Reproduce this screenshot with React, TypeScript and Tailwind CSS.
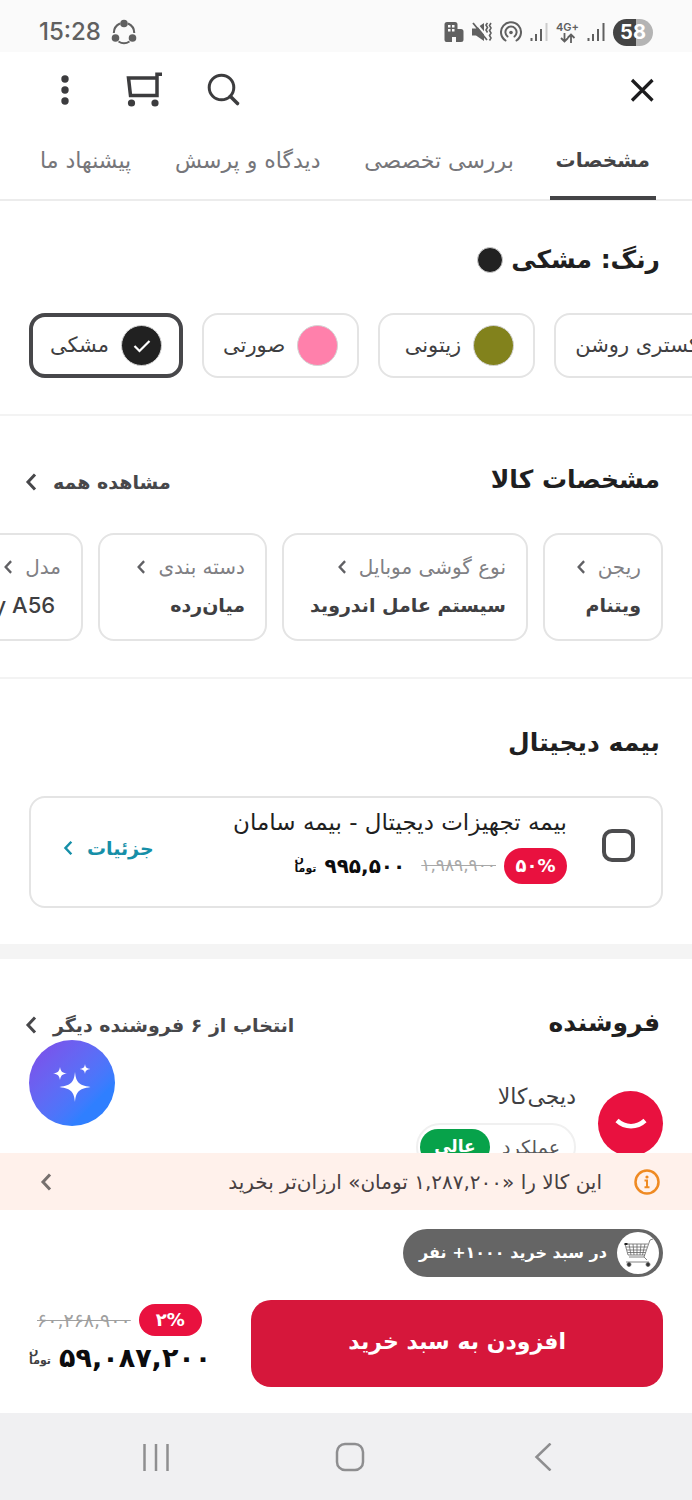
import type { ReactNode } from 'react';

function Chevron({ className }: { className: string }) {
  return (
    <svg viewBox="0 0 12 18" className={className} fill="none" stroke="currentColor" strokeWidth="3" aria-hidden="true">
      <path d="M10 1.5 3 9l7 7.5" />
    </svg>
  );
}

function StatusBar() {
  return (
    <div dir="ltr" className="flex h-13 shrink-0 items-center justify-between bg-[#fafafa] px-[39px] pt-3 font-['Inter',sans-serif] text-[#606060]">
      <div className="flex items-center gap-2.5">
        <span className="text-2xl font-medium">15:28</span>
        <svg viewBox="0 0 26 26" className="size-[26px]" fill="none" stroke="currentColor" strokeWidth="2" aria-hidden="true">
          <path d="M9 4.5A10.5 10.5 0 0 0 2.8 14M17 4.500A10.500 10.500 0 0 1 23.300 14M7.500 22.500a10.500 10.500 0 0 0 11 0" />
          <g fill="currentColor" stroke="none">
            <circle cx="13" cy="4.500" r="3.800" />
            <circle cx="4.500" cy="19" r="3.800" />
            <circle cx="21.500" cy="19" r="3.800" />
          </g>
        </svg>
      </div>
      <div className="flex items-center gap-2">
        <svg viewBox="0 0 20 20" className="size-5" aria-hidden="true">
          <path fill="currentColor" fillRule="evenodd" d="M3 0h8a2.500 2.500 0 0 1 2.500 2.500V7H17a2.500 2.500 0 0 1 2.500 2.500v8A2.500 2.500 0 0 1 17 20h-5v-5H8v5H2.500A2 2 0 0 1 .5 18V2.500A2.500 2.500 0 0 1 3 0Zm1 3v2.500h2.500V3Zm4 0v2.500h2.500V3ZM4 7v2.500h2.500V7Zm4 0v2.500h2.500V7Z" />
        </svg>
        <svg viewBox="0 0 20 20" className="size-5" aria-hidden="true">
          <path fill="currentColor" d="M0 6.500h4L12 1v18l-8-5.500H0Z" />
          <path stroke="#fafafa" strokeWidth="2" d="m3 0 14 17" />
          <path fill="none" stroke="currentColor" strokeWidth="1.800" d="m1 1 14 17" />
          <path fill="none" stroke="currentColor" strokeWidth="1.600" d="M15.500 1 14 3l1.500 2.500L14 8l1.500 2.500M19 1l-1.500 2.500L19 6l-1.500 2.500L19 11l-1.500 2.500L19 16l-1.500 2.500" />
        </svg>
        <svg viewBox="0 0 22 22" className="size-[22px]" fill="none" stroke="currentColor" strokeWidth="2" strokeLinecap="round" aria-hidden="true">
          <path d="M5.500 19.500a10 10 0 1 1 11 0" />
          <path d="M7.500 15.500a5.600 5.600 0 1 1 7 0" />
          <circle cx="11" cy="11.500" r="1.800" fill="currentColor" stroke="none" />
        </svg>
        <svg viewBox="0 0 18 20" className="h-5 w-[18px]" fill="none" stroke="currentColor" strokeWidth="2" aria-hidden="true">
          <path d="M1.500 16v3M6 12v7M11 7v12" />
          <path stroke="#cccccc" d="M16.500 1v18" />
        </svg>
        <div className="flex flex-col items-center">
          <span className="text-[11px] leading-3 font-semibold">4G+</span>
          <svg viewBox="0 0 16 10" className="h-2.5 w-4" fill="none" stroke="currentColor" strokeWidth="1.800" aria-hidden="true">
            <path d="M4.500 0v8.500M1 5l3.500 3.500L8 5M11 10V1.500M7.500 5 11 1.500 14.500 5" />
          </svg>
        </div>
        <svg viewBox="0 0 18 20" className="h-5 w-[18px]" fill="none" stroke="currentColor" strokeWidth="2" aria-hidden="true">
          <path d="M1.500 16v3M6 12v7M11 7v12M16.500 1v18" />
        </svg>
        <span className="flex h-[27px] w-10 items-center justify-center rounded-full bg-linear-to-r from-[#444444] from-58% to-[#b4b4b4] to-58% text-xl font-bold text-white">58</span>
      </div>
    </div>
  );
}

function Header() {
  return (
    <div className="flex h-[76px] shrink-0 items-center justify-between pr-9 pl-[49px] text-[#3c3c3e]">
      <button type="button" aria-label="بستن" className="text-[#1c1c1e]">
        <svg viewBox="0 0 28 28" className="size-7" fill="none" stroke="currentColor" strokeWidth="3.200" aria-hidden="true">
          <path d="m4 4 20.500 20.500M24.500 4 4 24.500" />
        </svg>
      </button>
      <div className="flex items-center gap-11">
        <button type="button" aria-label="جستجو">
          <svg viewBox="0 0 34 34" className="size-[34px]" fill="none" stroke="currentColor" strokeWidth="3" aria-hidden="true">
            <circle cx="14.500" cy="14.500" r="12.300" />
            <path d="m23.500 23.500 7 7" strokeWidth="3.600" strokeLinecap="round" />
          </svg>
        </button>
        <button type="button" aria-label="سبد خرید">
          <svg viewBox="0 0 38 36" className="h-9 w-[38px]" fill="none" stroke="currentColor" strokeWidth="3.500" aria-hidden="true">
            <path d="M37 2.200h-5V23.500H5.500L3.500 6H32" />
            <circle cx="6.500" cy="31" r="3.600" fill="currentColor" stroke="none" />
            <circle cx="30" cy="31" r="3.600" fill="currentColor" stroke="none" />
          </svg>
        </button>
        <button type="button" aria-label="بیشتر" className="px-3">
          <svg viewBox="0 0 8 30" className="h-[30px] w-2" fill="currentColor" aria-hidden="true">
            <circle cx="4" cy="4" r="3.700" />
            <circle cx="4" cy="15" r="3.700" />
            <circle cx="4" cy="26" r="3.700" />
          </svg>
        </button>
      </div>
    </div>
  );
}

function Tabs() {
  const tabs = ['مشخصات', 'بررسی تخصصی', 'دیدگاه و پرسش', 'پیشنهاد ما'];
  return (
    <nav className="flex h-[73px] shrink-0 justify-between border-b-2 border-[#ececec] pr-9 pl-8">
      {tabs.map((tab, i) =>
        i === 0 ? (
          <a key={tab} href="#specs" aria-current="page" className="flex h-[72px] items-center rounded-t-sm border-b-4 border-[#444446] px-1.5 pt-2 pb-3 text-xl font-bold text-[#444446]">
            {tab}
          </a>
        ) : (
          <a key={tab} href="#more" className="flex h-[68px] items-center px-2 pt-2 pb-3 text-[22px] text-[#76767a]">
            {tab}
          </a>
        ),
      )}
    </nav>
  );
}

function Title({ children }: { children: ReactNode }) {
  return <h2 className="flex items-center gap-2 text-[25px] leading-9 font-bold text-[#1f1f21]">{children}</h2>;
}

function MoreLink({ children }: { children: ReactNode }) {
  return (
    <a href="#all" className="flex items-center gap-4 pt-1 text-[19px] leading-9 font-bold text-[#47474a]">
      {children}
      <Chevron className="h-[18px] w-3" />
    </a>
  );
}

function ColorOption({ name, swatch, selected = false }: { name: string; swatch: string; selected?: boolean }) {
  return (
    <button
      type="button"
      aria-pressed={selected}
      className={`flex h-[65px] shrink-0 items-center gap-3 rounded-2xl text-[21px] text-[#3f3f42] ${
        selected ? 'border-4 border-[#47474a] px-[17px]' : 'min-w-[157px] border-2 border-[#e4e4e4] px-[19px]'
      }`}
    >
      <span className={`flex size-[41px] items-center justify-center rounded-full border border-[#d4d4d4] ${swatch}`}>
        {selected && (
          <svg viewBox="0 0 18 14" className="h-3.5 w-[18px]" fill="none" stroke="white" strokeWidth="2.200" aria-hidden="true">
            <path d="m1.500 7 5 5L16.500 2" />
          </svg>
        )}
      </span>
      {name}
    </button>
  );
}

function Spec({ label, value, className }: { label: string; value: string; className: string }) {
  return (
    <a href="#spec" className={`flex h-[108px] shrink-0 flex-col items-start justify-center gap-2 rounded-2xl border-2 border-[#e4e4e4] pr-5 pl-[26px] whitespace-nowrap ${className}`}>
      <span className="flex items-center gap-3 font-['DejaVu_Sans',sans-serif] text-xl leading-7 font-normal text-[#808084]">
        {label}
        <Chevron className="h-3.5 w-2.5 text-[#606064]" />
      </span>
      <span className="leading-8 text-[#3f3f42]">{value}</span>
    </a>
  );
}

function Toman({ className }: { className: string }) {
  return (
    <span dir="rtl" aria-label="تومان" className={`flex flex-col items-end pb-1 text-[11px] font-bold ${className}`}>
      <span className="leading-2.5">ن</span>
      <span className="leading-2.5">توما</span>
    </span>
  );
}

function SellerLogo() {
  return (
    <span className="flex size-[65px] shrink-0 items-center justify-center rounded-full bg-[#e9113f]">
      <svg viewBox="0 0 32 14" className="h-3.5 w-8" fill="none" stroke="white" strokeWidth="4.500" aria-hidden="true">
        <path d="M2 3.500c8 7.500 20 7.500 28 0" />
      </svg>
    </span>
  );
}

function Trolley() {
  return (
    <span className="flex size-[42px] items-center justify-center rounded-full bg-white">
      <svg viewBox="0 0 30 30" className="size-[30px]" fill="none" stroke="#666666" strokeWidth="0.800" aria-hidden="true">
        <path d="M30 1l-3 1-6 17H6M2 6h23M2 6l3 11h17M3 9h21M4 12h19M4.500 14.500h18M6 6l2 11M10 6l1 11M14 6v11M18 6l-1 11M22 6l-2.500 11M21 19l3 3M3 24h23" />
        <path d="M1.500 6h3" strokeWidth="2" stroke="#222222" />
        <circle cx="6" cy="26.500" r="2" fill="#333333" />
        <circle cx="25" cy="26.500" r="2" fill="#333333" />
      </svg>
    </span>
  );
}

function Dock() {
  return (
    <footer className="relative shrink-0 bg-white">
      <button type="button" aria-label="دستیار هوشمند" className="absolute bottom-full left-[29px] mb-[27px] flex size-[86px] items-center justify-center rounded-full bg-linear-to-br from-[#7656ec] from-15% to-[#2f7fff] to-75%">
        <svg viewBox="0 0 38 38" className="size-[38px]" fill="white" aria-hidden="true">
          <path d="M22 8c1.200 10 3 13 15.500 15C25 25 23.200 28 22 38c-1.200-10-3-13-15.500-15C19 21 20.800 18 22 8Z" />
          <path d="M7 3c.8 4.500 2 5.800 7 6.500-5 .7-6.200 2-7 6.500-.8-4.500-2-5.800-7-6.500C5 8.800 6.200 7.500 7 3ZM32 0c.6 3.500 1.500 4.500 5.500 5-4 .5-4.900 1.500-5.500 5-.6-3.500-1.500-4.500-5.500-5 4-.5 4.900-1.500 5.500-5Z" />
        </svg>
      </button>
      <a href="#cheaper" className="flex h-[57px] items-center bg-[#fff1eb] pr-8 pl-10 text-xl text-[#474042]">
        <svg viewBox="0 0 26 26" className="ml-8 size-[26px] shrink-0 text-[#ef8a22]" fill="none" stroke="currentColor" strokeWidth="2.500" aria-hidden="true">
          <circle cx="13" cy="13" r="11.500" />
          <path d="M10.500 11.500H13V18M10.500 18.200h5" strokeWidth="2" />
          <circle cx="13" cy="8" r="1.600" fill="currentColor" stroke="none" />
        </svg>
        <span className="grow">این کالا را «۱,۲۸۷,۲۰۰ تومان» ارزان‌تر بخرید</span>
        <Chevron className="h-[18px] w-3 text-[#76706e]" />
      </a>
      <div className="px-[29px] pt-[19px] pb-[26px]">
        <div className="flex h-12 w-fit items-center gap-2.5 rounded-full bg-[#656565] pr-1 pl-4 text-base font-bold text-white">
          <Trolley />
          در سبد خرید ۱۰۰۰+ نفر
        </div>
        <div className="mt-[23px] flex items-center justify-between gap-10">
          <button type="button" className="h-[87px] grow rounded-[20px] bg-[#d6173b] pb-1 text-[22px] font-bold text-white">
            افزودن به سبد خرید
          </button>
          <div dir="ltr" className="flex flex-col gap-1 pb-2">
            <div className="flex items-center gap-2 pl-2">
              <span className="text-[19px] leading-8 text-[#a0a0a0] line-through">۶۰,۲۶۸,۹۰۰</span>
              <span className="flex h-8 w-[63px] items-center justify-center rounded-full bg-[#e9113f] text-lg font-bold text-white">۲%</span>
            </div>
            <div className="flex items-center gap-2">
              <Toman className="text-[#3f3f42]" />
              <span className="text-[27px] leading-9 font-bold text-[#0c0c0e]">۵۹,۰۸۷,۲۰۰</span>
            </div>
          </div>
        </div>
      </div>
      <div dir="ltr" className="flex h-[87px] items-center justify-between bg-[#f0f0f2] pr-[135px] pl-[142px] text-[#8e8e90]">
        <button type="button" aria-label="برنامه‌های اخیر">
          <svg viewBox="0 0 28 28" className="size-7" fill="none" stroke="currentColor" strokeWidth="2.500" aria-hidden="true">
            <path d="M2.500 1v27M14 1v27M25.500 1v27" />
          </svg>
        </button>
        <button type="button" aria-label="خانه">
          <svg viewBox="0 0 30 30" className="size-[30px]" fill="none" stroke="currentColor" strokeWidth="2.500" aria-hidden="true">
            <rect x="2" y="2" width="26" height="26" rx="8" />
          </svg>
        </button>
        <button type="button" aria-label="بازگشت">
          <svg viewBox="0 0 28 28" className="size-7" fill="none" stroke="currentColor" strokeWidth="2.500" aria-hidden="true">
            <path d="M21.500 0.500 7.500 14l14 13.500" />
          </svg>
        </button>
      </div>
    </footer>
  );
}

export default function App() {
  return (
    <div dir="rtl" lang="fa" className="flex h-screen flex-col overflow-hidden bg-white font-['DejaVu_Sans',sans-serif]">
      <StatusBar />
      <Header />
      <Tabs />
      <main className="min-h-0 flex-1 overflow-x-hidden overflow-y-auto [scrollbar-width:none]">
        <section className="border-b-2 border-[#f3f3f3] pt-[41px] pb-[36px]">
          <div className="px-8">
            <Title>
              رنگ: مشکی
              <span className="size-[26px] rounded-full border border-[#cccccc] bg-[#212121]" />
            </Title>
          </div>
          <div className="mt-[35px] flex justify-end gap-[19px] overflow-hidden pl-[29px]">
            <ColorOption name="خاکستری روشن" swatch="bg-[#d3d3d3]" />
            <ColorOption name="زیتونی" swatch="bg-[#82821c]" />
            <ColorOption name="صورتی" swatch="bg-[#ff80ab]" />
            <ColorOption name="مشکی" swatch="bg-[#212121]" selected />
          </div>
        </section>

        <section id="specs" className="border-b-2 border-[#f3f3f3] pt-[46px] pb-[36px]">
          <div className="flex h-9 items-center justify-between pr-8 pl-[25px]">
            <Title>مشخصات کالا</Title>
            <MoreLink>مشاهده همه</MoreLink>
          </div>
          <div className="mt-[35px] flex gap-[15px] overflow-hidden pr-[29px]">
            <Spec label="ریجن" value="ویتنام" className="min-w-[120px] text-[19px] font-bold" />
            <Spec label="نوع گوشی موبایل" value="سیستم عامل اندروید" className="min-w-[245px] text-[19px] font-bold" />
            <Spec label="دسته بندی" value="میان‌رده" className="min-w-[169px] text-[19px] font-bold" />
            <Spec label="مدل" value={'\u200EGalaxy A56\u00a0\u200E'} className="font-['Inter','DejaVu_Sans',sans-serif] text-[22px] font-medium" />
          </div>
        </section>

        <section className="border-b-[15px] border-[#f4f4f4] px-[29px] pt-[46px] pb-[36px]">
          <div className="px-[3px]">
            <Title>بیمه دیجیتال</Title>
          </div>
          <div className="mt-[35px] flex h-[112px] items-center rounded-2xl border-2 border-[#e4e4e4] pr-[26px] pb-3.5 pl-8">
            <input id="insurance" type="checkbox" className="size-[33px] shrink-0 appearance-none rounded-[10px] border-4 border-[#4c4c4e] checked:bg-[#4c4c4e]" />
            <div className="mr-[35px] flex grow flex-col gap-2.5">
              <label htmlFor="insurance" className="text-[23px] leading-8 text-[#1f1f21]">بیمه تجهیزات دیجیتال - بیمه سامان</label>
              <div className="flex items-center gap-2">
                <span dir="ltr" className="flex h-9 w-[63px] items-center justify-center rounded-full bg-[#e9113f] text-lg font-bold text-white">۵۰%</span>
                <span dir="ltr" className="text-[17px] text-[#a8a8a8] line-through">۱,۹۸۹,۹۰۰</span>
                <span dir="ltr" className="mr-2 text-xl font-bold text-[#0c0c0e]">۹۹۵,۵۰۰</span>
                <Toman className="text-[#0c0c0e]" />
              </div>
            </div>
            <a href="#details" className="flex items-center gap-3.5 pt-1.5 text-[19px] font-bold text-[#168fa8]">
              جزئیات
              <Chevron className="h-4 w-2.5" />
            </a>
          </div>
        </section>

        <section className="px-[29px] pt-[46px] pb-10">
          <div className="-ml-1 flex h-9 items-center justify-between pr-[3px]">
            <Title>فروشنده</Title>
            <MoreLink>انتخاب از ۶ فروشنده دیگر</MoreLink>
          </div>
          <div className="mt-10 flex gap-[22px]">
            <div className="pt-[10px]"><SellerLogo /></div>
            <div className="flex flex-col items-start gap-2.5">
              <span className="text-[22px] leading-8 text-[#3f3f42]">دیجی‌کالا</span>
              <div className="flex h-12 items-center gap-3 rounded-full border-2 border-[#f0f0f0] pr-3.5 pl-0.5 text-[19px] text-[#58585a]">
                عملکرد
                <span className="flex h-9 w-[70px] items-center justify-center rounded-full bg-[#07a24a] text-[17px] font-bold text-white">عالی</span>
              </div>
            </div>
          </div>
        </section>
      </main>
      <Dock />
    </div>
  );
}
